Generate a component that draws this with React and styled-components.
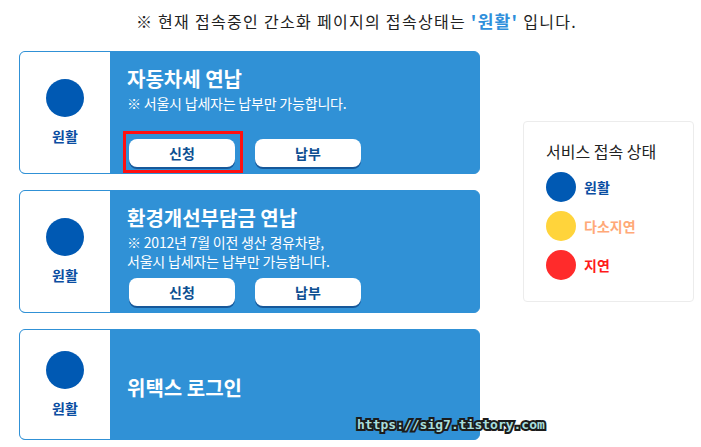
import React from 'react'
import styled, { createGlobalStyle } from 'styled-components'

const GlobalStyle = createGlobalStyle`
  html, body {
    margin: 0;
    padding: 0;
    background: #fff;
    font-family: "Noto Sans CJK KR", "Noto Sans", sans-serif;
  }
`

const services = [
  {
    title: '자동차세 연납',
    notes: ['※ 서울시 납세자는 납부만 가능합니다.'],
    buttons: true,
    highlight: true
  },
  {
    title: '환경개선부담금 연납',
    notes: ['※ 2012년 7월 이전 생산 경유차량,', '서울시 납세자는 납부만 가능합니다.'],
    buttons: true
  },
  {
    title: '위택스 로그인',
    buttons: false
  }
]

const legend = [
  { label: '원활', dot: '#0059b3', text: '#0b4ea2' },
  { label: '다소지연', dot: '#ffd43b', text: '#ffa978' },
  { label: '지연', dot: '#ff2b2b', text: '#ff1a1a' }
]

const App = () => (
  <Page>
    <GlobalStyle />
    <Notice>
      ※ 현재 접속중인 간소화 페이지의 접속상태는 <strong>'원활'</strong> 입니다.
    </Notice>
    <Main>
      <CardList>
        {services.map((s) => (
          <Card key={s.title} short={!s.buttons}>
            <Status>
              <Dot size={38} color='#0059b3' />
              <StatusText>원활</StatusText>
            </Status>
            <Body centered={!s.buttons}>
              <Title>{s.title}</Title>
              {s.notes && (
                <Note>
                  {s.notes.map((n) => <div key={n}>{n}</div>)}
                </Note>
              )}
              {s.buttons && (
                <Buttons>
                  <Mark highlight={s.highlight}>
                    <Button>신청</Button>
                  </Mark>
                  <Button>납부</Button>
                </Buttons>
              )}
            </Body>
          </Card>
        ))}
      </CardList>
      <Legend>
        <LegendTitle>서비스 접속 상태</LegendTitle>
        {legend.map((l) => (
          <LegendItem key={l.label}>
            <Dot size={30} color={l.dot} />
            <LegendLabel color={l.text}>{l.label}</LegendLabel>
          </LegendItem>
        ))}
      </Legend>
    </Main>
    <Watermark>https://sig7.tistory.com</Watermark>
  </Page>
)

const Page = styled.div`
  position: relative;
  width: 701px;
  height: 447px;
  overflow: hidden;
`

const Notice = styled.p`
  margin: 0;
  padding: 9px 0 0 12px;
  height: 42px;
  box-sizing: border-box;
  text-align: center;
  font-size: 16px;
  line-height: 24px;
  letter-spacing: 1.3px;
  color: #222;
  strong {
    color: #2f8fdb;
    font-weight: bold;
    font-size: 17px;
  }
`

const Main = styled.div`
  display: flex;
  align-items: flex-start;
  padding: 9px 0 0 19px;
`

const CardList = styled.div`
  display: flex;
  flex-direction: column;
  gap: 16px;
  width: 461px;
`

const Card = styled.div`
  display: flex;
  height: ${(p) => (p.short ? 111 : 123)}px;
  box-sizing: border-box;
  border: 1px solid #3091d6;
  border-radius: 6px;
  background: #3091d6;
`

const Status = styled.div`
  width: 90px;
  flex: none;
  display: flex;
  flex-direction: column;
  align-items: center;
  justify-content: center;
  gap: 9px;
  background: #fff;
  border-radius: 5px 0 0 5px;
`

const Dot = styled.span`
  display: block;
  width: ${(p) => p.size}px;
  height: ${(p) => p.size}px;
  border-radius: 50%;
  background: ${(p) => p.color};
  flex: none;
`

const StatusText = styled.span`
  font-size: 14px;
  line-height: 20px;
  font-weight: bold;
  color: #0b4ea2;
`

const Body = styled.div`
  flex: 1;
  display: flex;
  flex-direction: column;
  justify-content: ${(p) => (p.centered ? 'center' : 'flex-start')};
  padding: 13px 0 6px 17px;
  color: #fff;
`

const Title = styled.h3`
  margin: 0;
  font-size: 20px;
  line-height: 28px;
  font-weight: bold;
`

const Note = styled.div`
  margin-top: 1px;
  font-size: 14px;
  line-height: 19px;
  letter-spacing: -0.2px;
`

const Buttons = styled.div`
  margin-top: auto;
  display: flex;
  gap: 20px;
  padding-left: 2px;
`

const Mark = styled.div`
  position: relative;
  display: flex;
  &::after {
    content: '';
    display: ${(p) => (p.highlight ? 'block' : 'none')};
    position: absolute;
    top: -8px;
    left: -6px;
    right: -8px;
    bottom: -6px;
    border: 3px solid #ff1010;
    pointer-events: none;
  }
`

const Button = styled.button`
  width: 106px;
  height: 28px;
  border: none;
  border-radius: 8px;
  background: #fff;
  box-shadow: 0 2px 0 #16589a;
  font-family: inherit;
  font-size: 14px;
  font-weight: bold;
  color: #0d4f91;
  padding: 0;
  cursor: pointer;
`

const Legend = styled.div`
  margin: 70px 0 0 43px;
  width: 171px;
  height: 181px;
  box-sizing: border-box;
  border: 1px solid #ececec;
  border-radius: 4px;
  padding: 17px 0 0 22px;
  display: flex;
  flex-direction: column;
  gap: 9px;
`

const LegendTitle = styled.div`
  font-size: 16px;
  line-height: 24px;
  color: #222;
`

const LegendItem = styled.div`
  display: flex;
  align-items: center;
  gap: 8px;
  height: 30px;
`

const LegendLabel = styled.span`
  font-size: 14px;
  font-weight: bold;
  color: ${(p) => p.color};
`

const Watermark = styled.div`
  position: absolute;
  left: 357px;
  top: 414px;
  font-family: "DejaVu Sans Mono", monospace;
  font-weight: bold;
  font-size: 13px;
  line-height: 22px;
  color: #a8dedd;
  -webkit-text-stroke: 4px #1c1c1c;
  paint-order: stroke fill;
`

export default App
